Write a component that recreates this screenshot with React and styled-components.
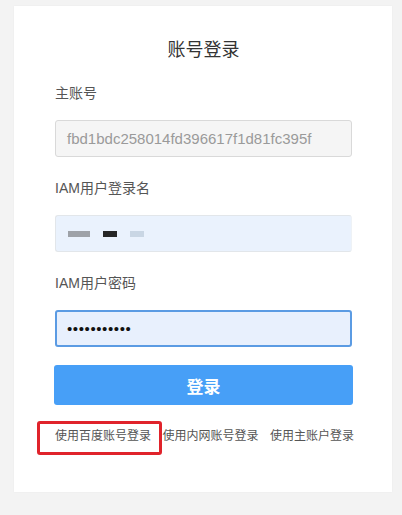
import React from "react";
import styled, { createGlobalStyle } from "styled-components";

const GlobalStyle = createGlobalStyle`
  body {
    margin: 0;
    background: #f3f3f3;
    font-family: "Liberation Sans", "Noto Sans CJK SC", sans-serif;
  }
`;

const fields = [
  { label: "主账号", kind: "disabled", value: "fbd1bdc258014fd396617f1d81fc395f" },
  { label: "IAM用户登录名", kind: "filled" },
  { label: "IAM用户密码", kind: "focused", value: "•••••••••••" },
];

const links = ["使用百度账号登录", "使用内网账号登录", "使用主账户登录"];

const App = () => {
  return (
    <Page>
      <GlobalStyle />
      <Card>
        <Title>账号登录</Title>
        {fields.map((field, index) => (
          <Field key={field.label} last={index === fields.length - 1}>
            <Label>{field.label}</Label>
            <InputBox kind={field.kind}>
              {field.kind === "filled" ? (
                <Redacted>
                  <Blot color="#9ea2a8" w={22} />
                  <Blot color="#262626" w={14} />
                  <Blot color="#c9d6e4" w={14} />
                </Redacted>
              ) : (
                <InputText kind={field.kind}>{field.value}</InputText>
              )}
            </InputBox>
          </Field>
        ))}
        <SubmitButton>登录</SubmitButton>
        <LinkRow>
          {links.map((link) => (
            <LinkText key={link}>{link}</LinkText>
          ))}
          <Highlight />
        </LinkRow>
      </Card>
    </Page>
  );
};

export default App;

const Page = styled.div`
  width: 402px;
  height: 515px;
  padding: 6px 0 0 14px;
  box-sizing: border-box;
  overflow: hidden;
`;

const Card = styled.div`
  width: 378px;
  height: 486px;
  box-sizing: border-box;
  padding: 32px 40px 0 41px;
  background: #fff;
  box-shadow: 0 0 2px rgba(0, 0, 0, 0.04);
  display: flex;
  flex-direction: column;
`;

const Title = styled.div`
  height: 24px;
  line-height: 24px;
  text-align: center;
  font-size: 18px;
  color: #333;
  margin-bottom: 22px;
`;

const Field = styled.div`
  display: flex;
  flex-direction: column;
  gap: 18px;
  margin-bottom: ${({ last }) => (last ? "18px" : "22px")};
`;

const Label = styled.div`
  height: 18px;
  line-height: 18px;
  font-size: 14px;
  color: #555;
`;

const InputBox = styled.div`
  height: 37px;
  box-sizing: border-box;
  display: flex;
  align-items: center;
  padding-left: 11px;
  border-radius: 3px;
  ${({ kind }) =>
    kind === "disabled"
      ? `
    background: #f5f5f5;
    border: 1px solid #d9d9d9;
  `
      : kind === "focused"
      ? `
    background: #e8f0fd;
    border: 2px solid #5b9be3;
    padding-left: 10px;
  `
      : `
    background: #eaf2fd;
    border: 1px solid #e2e6ea;
    border-right-color: #eef2f6;
  `}
`;

const InputText = styled.span`
  font-size: 15px;
  letter-spacing: ${({ kind }) => (kind === "focused" ? "0.6px" : "0")};
  color: ${({ kind }) => (kind === "focused" ? "#111" : "#9a9a9a")};
`;

const Redacted = styled.div`
  display: flex;
  align-items: center;
  gap: 13px;
  padding-left: 1px;
`;

const Blot = styled.span`
  width: ${({ w }) => w}px;
  height: 6px;
  background: ${({ color }) => color};
  filter: blur(0.6px);
`;

const SubmitButton = styled.div`
  height: 40px;
  margin: 0 -1px 22px;
  border-radius: 3px;
  background: #479ff7;
  color: #fff;
  font-size: 17px;
  font-weight: bold;
  display: flex;
  align-items: center;
  justify-content: center;
`;

const LinkRow = styled.div`
  position: relative;
  display: flex;
  justify-content: space-between;
  height: 18px;
  line-height: 18px;
  margin-right: -2px;
`;

const LinkText = styled.span`
  font-size: 12px;
  color: #555;
`;

const Highlight = styled.div`
  position: absolute;
  left: -18px;
  top: -6px;
  width: 125px;
  height: 34px;
  box-sizing: border-box;
  border: 3px solid #e0232b;
  border-radius: 3px;
`;
